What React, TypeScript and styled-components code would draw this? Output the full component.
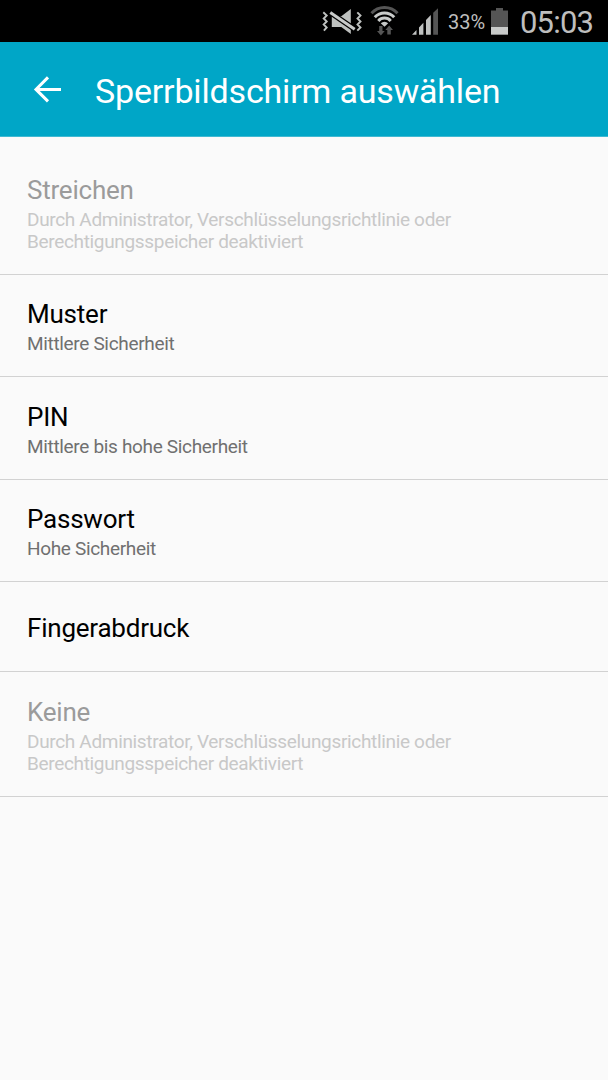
import React from 'react';
import styled, { createGlobalStyle } from 'styled-components';

const GlobalStyle = createGlobalStyle`
  * { box-sizing: border-box; }
  body { margin: 0; background: #fafafa; font-family: Roboto, sans-serif; }
`;

const Screen = styled.div`
  display: flex;
  flex-direction: column;
  width: 608px;
  height: 1080px;
  background: #fafafa;
`;

const StatusBar = styled.header`
  display: flex;
  align-items: center;
  justify-content: flex-end;
  height: 42px;
  padding-right: 14px;
  background: #000;
  color: #bebebe;
`;

const StatusIcons = styled.svg`
  display: block;
  width: 126px;
  height: 42px;
`;

const BatteryIcon = styled.svg`
  display: block;
  width: 20px;
  height: 42px;
  margin-left: 4px;
`;

const Percent = styled.span`
  width: 38px;
  padding-top: 2px;
  font-size: 20px;
  line-height: 42px;
  white-space: nowrap;
`;

const Clock = styled.span`
  width: 76px;
  margin-left: 8px;
  padding: 3px 0 0 2px;
  font-size: 31px;
  letter-spacing: -0.8px;
  line-height: 42px;
  white-space: nowrap;
`;

const TitleBar = styled.div`
  display: flex;
  align-items: center;
  height: 95px;
  padding-left: 33px;
  border-bottom: 1px solid #3fb9d2;
  background: #00a6c7;
  color: #fff;
`;

const BackIcon = styled.svg`
  width: 30px;
  height: 30px;
`;

const Title = styled.h1`
  margin: 3px 0 0 32px;
  font-size: 34px;
  font-weight: 400;
  letter-spacing: -0.18px;
  line-height: 40px;
  white-space: nowrap;
`;

const List = styled.main`
  padding-top: 12px;
`;

const Option = styled.section<{ $height: number; $top: number; $disabled?: boolean }>`
  height: ${(p) => p.$height}px;
  padding: ${(p) => p.$top}px 27px 0;
  border-bottom: 1px solid #d2d2d2;
  color: ${(p) => (p.$disabled ? '#9b9b9b' : '#000')};
`;

const Name = styled.div`
  margin-bottom: 1px;
  font-size: 26px;
  letter-spacing: -0.22px;
  line-height: 36px;
`;

const Note = styled.div<{ $disabled?: boolean }>`
  color: ${(p) => (p.$disabled ? '#c8c8c8' : '#707070')};
  font-size: 19px;
  letter-spacing: -0.33px;
  line-height: 22px;
  white-space: pre-line;
`;

const blocked = 'Durch Administrator, Verschlüsselungsrichtlinie oder\nBerechtigungsspeicher deaktiviert';

const options = [
  { name: 'Streichen', note: blocked, height: 126, top: 23, disabled: true },
  { name: 'Muster', note: 'Mittlere Sicherheit', height: 102, top: 21 },
  { name: 'PIN', note: 'Mittlere bis hohe Sicherheit', height: 103, top: 22 },
  { name: 'Passwort', note: 'Hohe Sicherheit', height: 102, top: 21 },
  { name: 'Fingerabdruck', height: 90, top: 28 },
  { name: 'Keine', note: blocked, height: 125, top: 22, disabled: true },
];

export default function App() {
  return (
    <Screen>
      <GlobalStyle />
      <StatusBar>
        <StatusIcons viewBox="322 0 126 42" fill="none">
          <g stroke="#bec1bf" strokeWidth="1.9">
            <path d="M323.3 12.3l3.4 3.2-3 3 3 3-3 3 3 3-2.8 3.2M357.3 12.3l3.2 3.2-3 3 3 3-3 3 3 3-3.2 3.2" />
          </g>
          <path d="M331.8 16.3h9.5l9.5-7.3v25l-9.5-7h-9.5z" fill="#bec1bf" />
          <path d="M330.3 12.6l24.4 16.6" stroke="#000" strokeWidth="5.4" />
          <path d="M330.3 12.6l24.4 16.6" stroke="#c8cac9" strokeWidth="3" />
          <path d="M371.5 13.2a17.6 17.6 0 0 1 26 0" stroke="#555" strokeWidth="3" />
          <path d="M374.8 17.2a13.2 13.2 0 0 1 19.4 0M378.3 20.9a8.3 8.3 0 0 1 12.4 0" stroke="#c8cac9" strokeWidth="3" />
          <path d="M380.8 23.3a5.2 5.2 0 0 1 7.4 0l-3.7 3.5z" fill="#c8cac9" />
          <path d="M379.2 26h3.3v5h2.2l-3.8 4.5-3.9-4.5h2.2zM387.3 34.5V30h-2l3.9-4.5L393 30h-2.2v4.5z" fill="#555" />
          <path d="M412 34.7l4.5-4.7v4.7zM419 34.7v-7.3l4.4-4.6v11.9zM426 34.7V20.1l4.8-5v19.6z" fill="#c0c2c1" />
          <path d="M433.2 34.7V12.7l4.8-4.5v26.5z" fill="#555" />
        </StatusIcons>
        <Percent>33%</Percent>
        <BatteryIcon viewBox="490 0 20 42">
          <path d="M491 34.5V10.5h5V8h7v2.5h5v24z" fill="#555" />
          <path d="M491 27h17v7.6h-17z" fill="#c8cac9" />
        </BatteryIcon>
        <Clock>05:03</Clock>
      </StatusBar>
      <TitleBar>
        <BackIcon viewBox="0 0 30 30" fill="none" stroke="currentColor" strokeWidth="3">
          <path d="M28 15.4H3M15 3.4L3 15.4l12 12" />
        </BackIcon>
        <Title>Sperrbildschirm auswählen</Title>
      </TitleBar>
      <List>
        {options.map((o) => (
          <Option key={o.name} $height={o.height} $top={o.top} $disabled={o.disabled}>
            <Name>{o.name}</Name>
            {o.note && <Note $disabled={o.disabled}>{o.note}</Note>}
          </Option>
        ))}
      </List>
    </Screen>
  );
}
